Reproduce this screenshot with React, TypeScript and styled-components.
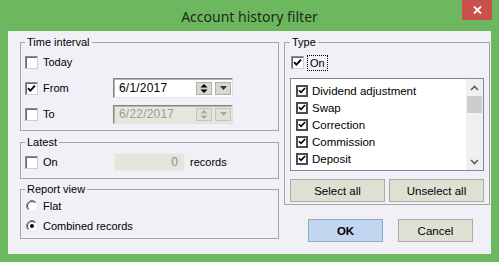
import React from "react";
import styled, { createGlobalStyle } from "styled-components";

const GlobalStyle = createGlobalStyle`
  html, body { margin: 0; padding: 0; width: 499px; height: 262px; overflow: hidden; }
  body { font-family: "Liberation Sans", Arial, sans-serif; font-size: 11px; color: #000; }
  * { box-sizing: border-box; }
`;

const Window = styled.div`
  width: 499px;
  height: 262px;
  background: #6db85e;
  display: flex;
  flex-direction: column;
  padding: 0 8px 8px 8px;
`;

const TitleBar = styled.div`
  height: 31px;
  display: grid;
  grid-template-columns: 1fr auto 1fr;
  align-items: center;
`;

const Title = styled.div`
  grid-column: 2;
  font-family: "Noto Sans", "Open Sans", sans-serif;
  font-size: 14px;
  color: #1b2a1b;
  padding-top: 1px;
`;

const CloseButton = styled.div`
  grid-column: 3;
  justify-self: end;
  align-self: start;
  width: 30px;
  height: 20px;
  margin-right: -1px;
  background: #c9504c;
  display: flex;
  align-items: center;
  justify-content: center;
`;

const Client = styled.div`
  flex: 1;
  background: #f0f0f6;
  display: flex;
  padding: 4px 1px 0 12px;
  gap: 5px;
`;

const LeftCol = styled.div`
  width: 259px;
  display: flex;
  flex-direction: column;
`;

const RightCol = styled.div`
  width: 206px;
  display: flex;
  flex-direction: column;
`;

const Group = styled.fieldset<{ $h: number; $mb?: number; $pl?: number; $pr?: number }>`
  margin: 0 0 ${(p) => p.$mb ?? 0}px 0;
  padding: 0 ${(p) => p.$pr ?? 4}px 0 ${(p) => p.$pl ?? 4}px;
  height: ${(p) => p.$h}px;
  border: 1px solid #a4a4a4;
  min-width: 0;
  display: flex;
  flex-direction: column;
`;

const Legend = styled.legend`
  padding: 0 2px;
  font-size: 11px;
  line-height: 14px;
  color: #000;
`;

const Row = styled.div<{ $h: number }>`
  height: ${(p) => p.$h}px;
  display: flex;
  align-items: center;
  flex-shrink: 0;
`;

const CheckLabel = styled.label<{ $w?: number }>`
  width: ${(p) => (p.$w ? `${p.$w}px` : "auto")};
  display: flex;
  align-items: center;
  gap: 5px;
  font-size: 11px;
`;

const SunkenBox = styled.span`
  width: 13px;
  height: 13px;
  flex-shrink: 0;
  background: #fff;
  border: 1px solid;
  border-color: #8c8c8c #cfcfcf #cfcfcf #8c8c8c;
  box-shadow: inset 1px 1px 0 #6a6a6a;
  display: flex;
  align-items: center;
  justify-content: center;
`;

const FlatBox = styled.span`
  width: 12px;
  height: 12px;
  flex-shrink: 0;
  background: #fff;
  border: 2px solid #4d4d4d;
  display: flex;
  align-items: center;
  justify-content: center;
`;

const DateBox = styled.div<{ $disabled?: boolean }>`
  width: 120px;
  height: ${(p) => (p.$disabled ? 19 : 20)}px;
  background: ${(p) => (p.$disabled ? "#e6e6dc" : "#fff")};
  border: 1px solid;
  border-color: #858585 #e2e2e2 #e2e2e2 #858585;
  box-shadow: inset 1px 1px 0 #b4b4b4;
  display: flex;
  align-items: center;
  padding: 0 1px 0 5px;
  gap: 3px;
`;

const DateText = styled.span<{ $disabled?: boolean }>`
  flex: 1;
  font-size: 12px;
  letter-spacing: 0.2px;
  color: ${(p) => (p.$disabled ? "#9c9c9c" : "#000")};
`;

const SmallBtn = styled.span<{ $disabled?: boolean }>`
  width: 16px;
  height: 13px;
  background: ${(p) => (p.$disabled ? "#e0e0d6" : "#d9d9cd")};
  border: 1px solid;
  border-color: #f4f4f0 #9a9a9a #9a9a9a #f4f4f0;
  outline: 1px solid ${(p) => (p.$disabled ? "#c4c4bc" : "#b0b0a8")};
  outline-offset: -1px;
  display: flex;
  align-items: center;
  justify-content: center;
`;

const CountBox = styled.div`
  width: 71px;
  height: 18px;
  background: #e5e5db;
  border: 1px solid #ececec;
  font-size: 12px;
  color: #8c8c8c;
  text-align: right;
  padding-right: 6px;
  line-height: 16px;
`;

const Suffix = styled.span`
  margin-left: 5px;
  font-size: 11px;
`;

const RadioLabel = styled.label`
  display: flex;
  align-items: center;
  gap: 5px;
  padding-left: 1px;
  font-size: 11px;
`;

const FocusText = styled.span`
  outline: 1px dotted #000;
  padding: 1px 2px;
  margin-left: -1px;
`;

const ListBox = styled.div`
  height: 93px;
  margin-top: 2px;
  border: 1px solid #828790;
  background: #fff;
  display: flex;
  overflow: hidden;
  flex-shrink: 0;
`;

const Items = styled.div`
  flex: 1;
  padding-top: 3px;
  overflow: hidden;
`;

const Item = styled.div`
  height: 17px;
  display: flex;
  align-items: center;
  gap: 4px;
  padding-left: 5px;
  font-size: 11.5px;
`;

const ScrollBar = styled.div`
  width: 17px;
  background: #f0f0f0;
  display: flex;
  flex-direction: column;
`;

const ScrollArrow = styled.div`
  height: 17px;
  display: flex;
  align-items: center;
  justify-content: center;
`;

const Thumb = styled.div`
  height: 17px;
  margin: 0 1px;
  background: #cdcdcd;
`;

const Spacer = styled.div`
  flex: 1;
`;

const ButtonRow = styled.div<{ $mt: number; $pl?: number; $gap: number }>`
  display: flex;
  margin-top: ${(p) => p.$mt}px;
  padding-left: ${(p) => p.$pl ?? 0}px;
  gap: ${(p) => p.$gap}px;
`;

const Button = styled.button<{ $w: number; $primary?: boolean }>`
  width: ${(p) => p.$w}px;
  height: 23px;
  padding: 0;
  font-family: "Liberation Sans", Arial, sans-serif;
  font-size: 11.5px;
  font-weight: ${(p) => (p.$primary ? 700 : 400)};
  color: #000;
  background: ${(p) => (p.$primary ? "#c3d6ef" : "#dfdfd3")};
  border: 1px solid ${(p) => (p.$primary ? "#93a9c6" : "#acaca4")};
  border-radius: 0;
`;

const Check = () => (
  <svg width="9" height="9" viewBox="0 0 9 9">
    <path d="M1 4.2 L3.4 6.6 L8 1.6" fill="none" stroke="#000" strokeWidth="1.8" />
  </svg>
);

const Radio = ({ on }: { on?: boolean }) => (
  <svg width="12" height="12" viewBox="0 0 12 12">
    <circle cx="6" cy="6" r="5.5" fill="#fff" />
    <path d="M2.1 9.9 A5.5 5.5 0 0 1 9.9 2.1" fill="none" stroke="#8a8a8a" strokeWidth="1" />
    <path d="M2.8 9.2 A4.5 4.5 0 0 1 9.2 2.8" fill="none" stroke="#404040" strokeWidth="1" />
    <path d="M9.9 2.1 A5.5 5.5 0 0 1 2.1 9.9" fill="none" stroke="#e8e8e8" strokeWidth="1" />
    {on && <circle cx="6" cy="6" r="2" fill="#000" />}
  </svg>
);

const SpinGlyph = ({ c }: { c: string }) => (
  <svg width="8" height="9" viewBox="0 0 8 9">
    <path d="M0.5 3.5 L4 0 L7.5 3.5 Z" fill={c} />
    <path d="M0.5 5.5 L4 9 L7.5 5.5 Z" fill={c} />
  </svg>
);

const DropGlyph = ({ c }: { c: string }) => (
  <svg width="7" height="4" viewBox="0 0 7 4">
    <path d="M0 0 L7 0 L3.5 4 Z" fill={c} />
  </svg>
);

const Chevron = ({ up }: { up?: boolean }) => (
  <svg width="9" height="6" viewBox="0 0 9 6">
    <path
      d={up ? "M1 5 L4.5 1.5 L8 5" : "M1 1 L4.5 4.5 L8 1"}
      fill="none"
      stroke="#606060"
      strokeWidth="1.7"
    />
  </svg>
);

const DatePicker = ({ value, disabled }: { value: string; disabled?: boolean }) => {
  const c = disabled ? "#a8a8a0" : "#000";
  return (
    <DateBox $disabled={disabled}>
      <DateText $disabled={disabled}>{value}</DateText>
      <SmallBtn $disabled={disabled}>
        <SpinGlyph c={c} />
      </SmallBtn>
      <SmallBtn $disabled={disabled}>
        <DropGlyph c={disabled ? "#a8a8a0" : "#333"} />
      </SmallBtn>
    </DateBox>
  );
};

const types = ["Dividend adjustment", "Swap", "Correction", "Commission", "Deposit", "Credit in/out"];

export default function App() {
  return (
    <>
      <GlobalStyle />
      <Window>
        <TitleBar>
          <Title>Account history filter</Title>
          <CloseButton>
            <svg width="9" height="8" viewBox="0 0 9 8">
              <path d="M1 0.5 L8 7.5 M8 0.5 L1 7.5" stroke="#fff" strokeWidth="1.8" />
            </svg>
          </CloseButton>
        </TitleBar>
        <Client>
          <LeftCol>
            <Group $h={96} $mb={4}>
              <Legend>Time interval</Legend>
              <Row $h={26}>
                <CheckLabel $w={88}>
                  <SunkenBox />
                  Today
                </CheckLabel>
              </Row>
              <Row $h={26}>
                <CheckLabel $w={88}>
                  <SunkenBox>
                    <Check />
                  </SunkenBox>
                  From
                </CheckLabel>
                <DatePicker value="6/1/2017" />
              </Row>
              <Row $h={26}>
                <CheckLabel $w={88}>
                  <SunkenBox />
                  To
                </CheckLabel>
                <DatePicker value="6/22/2017" disabled />
              </Row>
            </Group>
            <Group $h={44} $mb={3}>
              <Legend>Latest</Legend>
              <Row $h={26}>
                <CheckLabel $w={89}>
                  <SunkenBox />
                  On
                </CheckLabel>
                <CountBox>0</CountBox>
                <Suffix>records</Suffix>
              </Row>
            </Group>
            <Group $h={57}>
              <Legend>Report view</Legend>
              <Row $h={20}>
                <RadioLabel>
                  <Radio />
                  Flat
                </RadioLabel>
              </Row>
              <Row $h={20}>
                <RadioLabel>
                  <Radio on />
                  Combined records
                </RadioLabel>
              </Row>
            </Group>
          </LeftCol>
          <RightCol>
            <Group $h={170} $pl={5} $pr={5}>
              <Legend>Type</Legend>
              <Row $h={27}>
                <CheckLabel style={{ marginLeft: 1 }}>
                  <SunkenBox>
                    <Check />
                  </SunkenBox>
                  <FocusText>On</FocusText>
                </CheckLabel>
              </Row>
              <ListBox>
                <Items>
                  {types.map((t) => (
                    <Item key={t}>
                      <FlatBox>
                        <Check />
                      </FlatBox>
                      {t}
                    </Item>
                  ))}
                </Items>
                <ScrollBar>
                  <ScrollArrow>
                    <Chevron up />
                  </ScrollArrow>
                  <Thumb />
                  <Spacer />
                  <ScrollArrow>
                    <Chevron />
                  </ScrollArrow>
                </ScrollBar>
              </ListBox>
              <ButtonRow $mt={8} $gap={4}>
                <Button $w={95}>Select all</Button>
                <Button $w={95}>Unselect all</Button>
              </ButtonRow>
            </Group>
            <ButtonRow $mt={14} $pl={24} $gap={15}>
              <Button $w={75} $primary>
                OK
              </Button>
              <Button $w={75}>Cancel</Button>
            </ButtonRow>
          </RightCol>
        </Client>
      </Window>
    </>
  );
}
